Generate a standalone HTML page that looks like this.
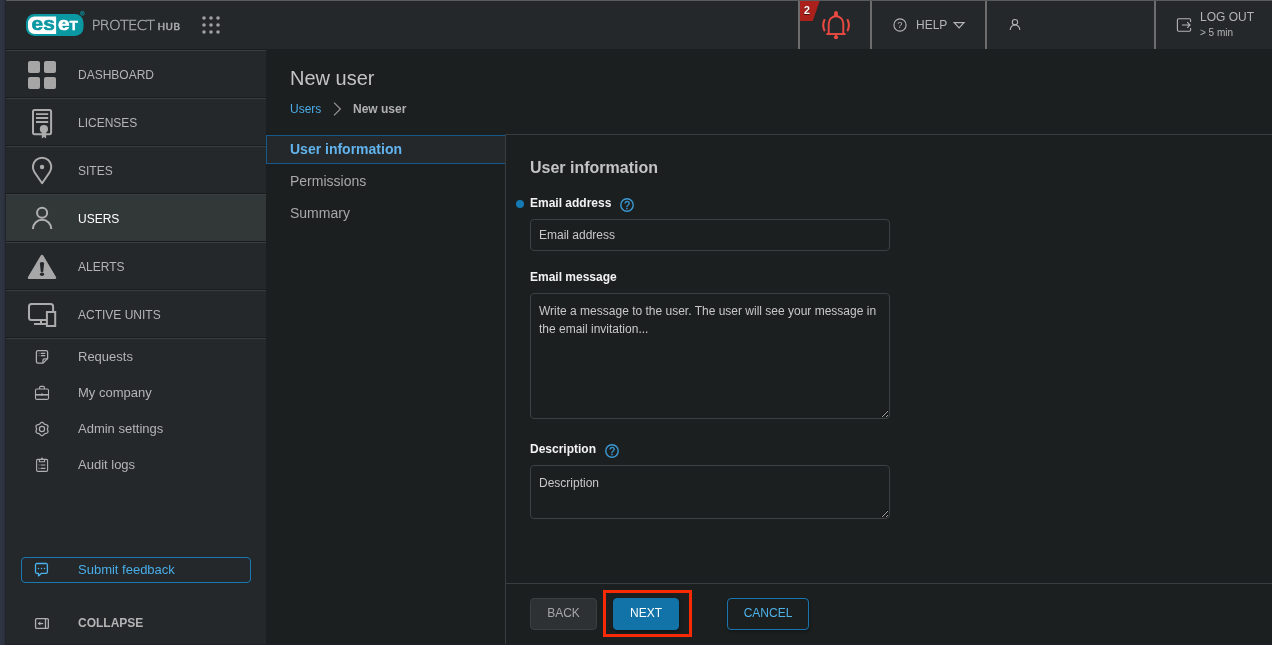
<!DOCTYPE html>
<html lang="en">
<head>
<meta charset="utf-8">
<title>ESET PROTECT HUB - New user</title>
<style>
*{box-sizing:border-box;margin:0;padding:0}
html,body{width:1272px;height:645px;overflow:hidden;background:#1c1f20;font-family:"Liberation Sans",Arial,sans-serif;color:#b4b4b4}
.abs{position:absolute}
#strip{left:0;top:0;width:6px;height:645px;background:linear-gradient(90deg,#2f3542 0,#2f3542 2px,#2e3340 2px,#2e3340 4px,#2b2f3b 4px,#2b2f3b 5px,#20232c 5px,#20232c 6px)}
#topline{left:6px;top:0;width:1266px;height:1px;background:#5b5b5b}
#header{left:6px;top:1px;width:1266px;height:48px;background:#24282b}
#hdrline{left:6px;top:49px;width:260px;height:1px;background:#181a1c}
#sidebar{left:6px;top:50px;width:260px;height:595px;background:#24282b}
.mi{position:absolute;left:0;width:260px;height:48px;border-top:1px solid #393e40;border-bottom:1px solid #191b1d;font-size:12px;color:#b4b4b4}
.mi span{position:absolute;left:72px;top:1px;line-height:46px;white-space:nowrap}
.mi.act{background:#313837;color:#fff}
.mi svg{position:absolute;left:0;top:-1px}
.si{position:absolute;left:0;width:260px;height:36px;font-size:13px;color:#b4b4b4}
.si span{position:absolute;left:72px;top:0;line-height:36px;white-space:nowrap}
.sep{position:absolute;top:0;width:2px;height:48px;background:#6d6d6d}
.lbl{position:absolute;font-weight:bold;font-size:12px;color:#f2f2f2;white-space:nowrap;line-height:14px}
.fld{position:absolute;left:530px;width:360px;background:#1c1f20;border:1px solid #3c4042;border-radius:4px;color:#c8c8c8;font:12px/18px "Liberation Sans",Arial,sans-serif;padding:6px 8px;outline:none}
.fld::placeholder{color:#c8c8c8;opacity:1}
.btn{position:absolute;top:598px;height:32px;border-radius:4px;font-size:12px;line-height:28px;text-align:center;white-space:nowrap}
</style>
</head>
<body>
<div id="root" style="position:absolute;left:0;top:0;width:1272px;height:645px;will-change:transform">
<div id="strip" class="abs"></div>
<div id="topline" class="abs"></div>
<div id="header" class="abs">
  <!-- logo -->
  <svg class="abs" style="left:14px;top:8px" width="210" height="34" viewBox="20 9 210 34">
    <rect x="26" y="14.1" width="57.5" height="22" rx="8.500" fill="#0a98a3"/>
    <path d="M34.500 16.600H56.100V33.900H34.500A6.500 6.500 0 0 1 28 27.400V23.100A6.500 6.500 0 0 1 34.500 16.600Z" fill="#fff"/>
    <g font-family="Liberation Sans, Arial, sans-serif" font-weight="bold" stroke-linejoin="round">
    <text transform="translate(31.600 30.100) scale(1.170 1)" font-size="17.800" fill="#0a98a3" stroke="#0a98a3" stroke-width="0.600">es</text>
    <text transform="translate(58.100 30.100) scale(1.170 1)" font-size="17.800" fill="#fff" stroke="#fff" stroke-width="0.600">e</text>
    <text transform="translate(69.700 30.100) scale(0.970 1)" font-size="13.600" fill="#fff" stroke="#fff" stroke-width="0.600">T</text>
    </g>
    <circle cx="82.400" cy="13.300" r="2" fill="none" stroke="#0a98a3" stroke-width="0.700"/>
    <text x="81.250" y="14.500" font-family="Liberation Sans, Arial, sans-serif" font-weight="bold" font-size="3.200" fill="#0a98a3">R</text>
    <text transform="translate(91.400 30.200) scale(1.048 1)" font-family="DejaVu Sans Light, DejaVu Sans, sans-serif" font-weight="200" font-size="14.300" letter-spacing="-0.900" fill="#a9abac" stroke="#a9abac" stroke-width="0.350">PROTECT</text>
    <text transform="translate(157.600 30.200) scale(1.170 1)" font-family="DejaVu Sans, sans-serif" font-size="8.700" letter-spacing="0.200" fill="#a9abac" stroke="#a9abac" stroke-width="0.450">HUB</text>
    <g fill="#a0a0a0">
      <circle cx="204" cy="18" r="1.8"/><circle cx="211" cy="18" r="1.8"/><circle cx="218" cy="18" r="1.8"/>
      <circle cx="204" cy="25" r="1.8"/><circle cx="211" cy="25" r="1.8"/><circle cx="218" cy="25" r="1.8"/>
      <circle cx="204" cy="32" r="1.8"/><circle cx="211" cy="32" r="1.8"/><circle cx="218" cy="32" r="1.8"/>
    </g>
  </svg>
  <div class="sep" style="left:792px"></div>
  <div class="sep" style="left:864px"></div>
  <div class="sep" style="left:979px"></div>
  <div class="sep" style="left:1148px"></div>
  <!-- badge + bell -->
  <svg class="abs" style="left:794px;top:0" width="70" height="48" viewBox="800 1 70 48">
    <path d="M800 1 H819.6 L812.8 21 H800 Z" fill="#aa211c"/>
    <text x="803.900" y="15.400" font-family="Liberation Sans, Arial, sans-serif" font-weight="bold" font-size="10.600" fill="#4a0d0a">2</text><text x="803.900" y="14.400" font-family="Liberation Sans, Arial, sans-serif" font-weight="bold" font-size="10.600" fill="#fff">2</text>
    <g fill="none" stroke="#ea4a41" stroke-width="1.900" stroke-linecap="round">
      <path d="M828.700 34 V23.700 A7.300 7.500 0 0 1 843.300 23.700 V34"/>
      <path d="M826.4 34 H845.6" stroke-linecap="butt"/>
      <path d="M836 15.200 V13" stroke-width="3.800"/>
      <path d="M824.400 20 Q822 25.200 824.400 30.300" stroke-width="2.100"/>
      <path d="M847.700 20 Q850.100 25.200 847.700 30.300" stroke-width="2.100"/>
    </g>
    <circle cx="836" cy="37.300" r="2.050" fill="#ea4a41"/><rect x="835.300" y="34" width="1.400" height="2" fill="#ea4a41"/>
  </svg>
  <!-- help -->
  <svg class="abs" style="left:884px;top:14px" width="84" height="22" viewBox="890 15 84 22">
    <circle cx="900" cy="25" r="6.1" fill="none" stroke="#b4b4b4" stroke-width="1.1"/>
    <text x="897.3" y="28.4" font-family="Liberation Sans, Arial, sans-serif" font-size="9.4" fill="#b4b4b4">?</text>
    <path d="M954.2 22.6 H964 L959.1 27.8 Z" fill="none" stroke="#b4b4b4" stroke-width="1.2" stroke-linejoin="miter"/>
  </svg>
  <div class="abs" style="left:910px;top:17px;font-size:12px;line-height:14px;color:#b4b4b4">HELP</div>
  <!-- user -->
  <svg class="abs" style="left:1001px;top:16px" width="16" height="16" viewBox="1007 17 16 16">
    <circle cx="1015" cy="22.2" r="2.7" fill="none" stroke="#b4b4b4" stroke-width="1.1"/>
    <path d="M1010.2 30 A4.8 5 0 0 1 1019.8 30" fill="none" stroke="#b4b4b4" stroke-width="1.1"/>
  </svg>
  <!-- logout -->
  <svg class="abs" style="left:1168px;top:15px" width="20" height="20" viewBox="1174 16 20 20">
    <path d="M1190.6 22 V20 A1.2 1.2 0 0 0 1189.4 18.8 H1178.6 A1.2 1.2 0 0 0 1177.4 20 V30 A1.2 1.2 0 0 0 1178.6 31.2 H1189.4 A1.2 1.2 0 0 0 1190.6 30 V28" fill="none" stroke="#b4b4b4" stroke-width="1.1"/>
    <path d="M1182 25 H1190 M1187.2 22.2 L1190 25 L1187.2 27.8" fill="none" stroke="#b4b4b4" stroke-width="1.1"/>
  </svg>
  <div class="abs" style="left:1194px;top:9px;font-size:12px;line-height:14px;color:#b4b4b4;white-space:nowrap">LOG OUT</div>
  <div class="abs" style="left:1194px;top:26px;font-size:10px;line-height:12px;color:#b4b4b4;white-space:nowrap">&gt; 5 min</div>
</div>
<div id="hdrline" class="abs"></div>

<div id="sidebar" class="abs">
  <div class="mi" style="top:0"><svg width="72" height="48" viewBox="6 50 72 48"><g fill="#a6a6a6"><rect x="28" y="61" width="12" height="12" rx="2"/><rect x="44" y="61" width="12" height="12" rx="2"/><rect x="28" y="77" width="12" height="12" rx="2"/><rect x="44" y="77" width="12" height="12" rx="2"/></g></svg><span>DASHBOARD</span></div>
  <div class="mi" style="top:48px"><svg width="72" height="48" viewBox="6 98 72 48"><g fill="none" stroke="#acacac"><rect x="33" y="110" width="18.1" height="24.2" rx="1.6" stroke-width="2"/><path d="M36 114.1H48.200M36 118H48.200M36 122H48.200" stroke-width="1.9"/></g><circle cx="43.9" cy="129" r="4.1" fill="#acacac"/><path d="M41.8 131V138.6L43.950 136.900L46.100 138.600V131Z" fill="#acacac"/></svg><span>LICENSES</span></div>
  <div class="mi" style="top:96px"><svg width="72" height="48" viewBox="6 146 72 48"><path d="M42.100 183.200L49.670 172.220A9.200 9.200 0 1 0 34.530 172.220Z" fill="none" stroke="#acacac" stroke-width="2" stroke-linejoin="round"/><circle cx="42.050" cy="167" r="2.2" fill="#acacac"/></svg><span>SITES</span></div>
  <div class="mi act" style="top:144px"><svg width="72" height="48" viewBox="6 194 72 48"><circle cx="42.100" cy="212.700" r="5.050" fill="none" stroke="#b0b0b0" stroke-width="2"/><path d="M32.900 229A9.200 9.300 0 0 1 51.300 229" fill="none" stroke="#b0b0b0" stroke-width="2"/></svg><span>USERS</span></div>
  <div class="mi" style="top:192px"><svg width="72" height="48" viewBox="6 242 72 48"><path d="M42 256L54.900 277.700H29.100Z" fill="#a8a8a8" stroke="#a8a8a8" stroke-width="2.600" stroke-linejoin="round"/><path d="M39.900 262.900Q42 261.300 44.100 262.900L43.300 271.600Q42 272.700 40.700 271.600Z" fill="#24282b"/><ellipse cx="42" cy="274.300" rx="2.100" ry="1.700" fill="#24282b"/></svg><span>ALERTS</span></div>
  <div class="mi" style="top:240px"><svg width="72" height="48" viewBox="6 290 72 48"><g fill="none" stroke="#acacac" stroke-width="2"><rect x="29" y="304" width="24.100" height="16.100" rx="2.500"/><path d="M41 320.400V324M34 324H46.500" /><rect x="46.900" y="312" width="8.300" height="14" fill="#24282b"/></g></svg><span>ACTIVE UNITS</span></div>

  <div class="abs" style="left:0;top:288px;width:260px;height:1px;background:#393e40"></div>
  <div class="si" style="top:289px"><svg class="abs" style="left:0;top:0" width="72" height="36" viewBox="6 339 72 36"><g fill="none" stroke="#b0b0b0" stroke-width="1.3"><path d="M38 350.6H46A1.6 1.6 0 0 1 47.6 352.2V358.6L43 363.2H38A1.6 1.6 0 0 1 36.4 361.6V352.2A1.6 1.6 0 0 1 38 350.6Z"/><path d="M47.4 358.8H44.4A1.4 1.4 0 0 0 43 360.2V363"/><path d="M40.800 353.400H45.200M40.800 355.700H45.200"/><path d="M38.600 353.400H39.600M38.600 355.700H39.600" stroke-opacity="0.500"/></g></svg><span>Requests</span></div>
  <div class="si" style="top:325px"><svg class="abs" style="left:0;top:0" width="72" height="36" viewBox="6 375 72 36"><g fill="none" stroke="#b0b0b0" stroke-width="1.1"><rect x="35.5" y="389" width="13" height="10.4" rx="1.4"/><path d="M39.6 389V387.6A1.2 1.2 0 0 1 40.8 386.4H43.2A1.2 1.2 0 0 1 44.4 387.6V389"/><path d="M35.5 394.800H48.5" stroke-width="1.600"/><path d="M42 393.2V395.8"/></g></svg><span>My company</span></div>
  <div class="si" style="top:361px"><svg class="abs" style="left:0;top:0" width="72" height="36" viewBox="6 411 72 36"><g fill="none" stroke="#b0b0b0" stroke-width="1.1" stroke-linejoin="round"><path d="M47.45 429.00L47.51 428.52L47.66 428.00L47.84 427.43L47.97 426.83L47.95 426.22L47.76 425.68L47.38 425.23L46.86 424.92L46.28 424.72L45.70 424.60L45.17 424.47L44.73 424.28L44.34 423.99L43.97 423.60L43.57 423.16L43.10 422.75L42.57 422.46L42.00 422.35L41.43 422.46L40.90 422.75L40.43 423.16L40.03 423.60L39.66 423.99L39.27 424.28L38.83 424.47L38.30 424.60L37.72 424.72L37.14 424.92L36.62 425.23L36.24 425.68L36.05 426.22L36.03 426.83L36.16 427.43L36.34 428.00L36.49 428.52L36.55 429.00L36.49 429.48L36.34 430.00L36.16 430.57L36.03 431.17L36.05 431.78L36.24 432.32L36.62 432.77L37.14 433.08L37.72 433.28L38.30 433.40L38.83 433.53L39.27 433.72L39.66 434.01L40.03 434.40L40.43 434.84L40.90 435.25L41.43 435.54L42.00 435.65L42.57 435.54L43.10 435.25L43.57 434.84L43.97 434.40L44.34 434.01L44.72 433.72L45.17 433.53L45.70 433.40L46.28 433.28L46.86 433.08L47.38 432.77L47.76 432.32L47.95 431.78L47.97 431.17L47.84 430.57L47.66 430.00L47.51 429.48Z" stroke-width="1.250"/><circle cx="42" cy="429" r="2.600" stroke-width="1.200"/></g></svg><span>Admin settings</span></div>
  <div class="si" style="top:397px"><svg class="abs" style="left:0;top:0" width="72" height="36" viewBox="6 447 72 36"><g fill="none" stroke="#b0b0b0" stroke-width="1.1"><rect x="36.6" y="459.4" width="11" height="12" rx="1.2"/><path d="M39.400 459.400V461.700H44.600V459.400"/><circle cx="42" cy="458.300" r="0.900" fill="#b0b0b0" stroke="none"/><path d="M40.6 465H45.4M40.6 468.4H45.4"/><path d="M38.6 465H39.4M38.6 468.4H39.4"/></g></svg><span>Audit logs</span></div>

  <div class="abs" style="left:15px;top:507px;width:230px;height:26px;border:1px solid #1b78b0;border-radius:4px"></div>
  <svg class="abs" style="left:26px;top:510px" width="20" height="20" viewBox="32 560 20 20"><path d="M36.900 563.500H46A1.400 1.400 0 0 1 47.400 564.900V572A1.400 1.400 0 0 1 46 573.400H41.200L38.500 575.900V573.400H36.900A1.400 1.400 0 0 1 35.500 572V564.900A1.400 1.400 0 0 1 36.900 563.500Z" fill="none" stroke="#4ab2ec" stroke-width="1.3" stroke-linejoin="round"/><g fill="#4ab2ec"><circle cx="38.500" cy="568.500" r="0.750"/><circle cx="41.500" cy="568.500" r="0.750"/><circle cx="44.500" cy="568.500" r="0.750"/></g></svg>
  <div class="abs" style="left:72px;top:512px;font-size:13px;line-height:15px;color:#4aace6;white-space:nowrap">Submit feedback</div>

  <svg class="abs" style="left:26px;top:564px" width="20" height="20" viewBox="32 614 20 20"><g fill="none" stroke="#b0b0b0" stroke-width="1.300"><rect x="35.550" y="618.650" width="12.800" height="9.800" rx="1.200"/><path d="M45.500 618.600V628.600"/><path d="M39 623.550H43.200"/><path d="M40.300 621.500L37.600 623.550L40.300 625.600Z" fill="#b0b0b0" stroke="none"/></g></svg>
  <div class="abs" style="left:72px;top:566px;font-size:12px;line-height:14px;font-weight:bold;color:#b4b4b4;white-space:nowrap">COLLAPSE</div>
</div>

<!-- main -->
<div class="abs" style="left:290px;top:66px;font-size:20px;line-height:24px;color:#c4c4c4;white-space:nowrap">New user</div>
<div class="abs" style="left:290px;top:102px;font-size:12px;line-height:14px;color:#4aace6;white-space:nowrap">Users</div>
<svg class="abs" style="left:330px;top:101px" width="14" height="16" viewBox="0 0 14 16"><path d="M4 1.6L10.400 8L4 14.4" fill="none" stroke="#9a9a9a" stroke-width="1.1"/></svg>
<div class="abs" style="left:353px;top:102px;font-size:12px;line-height:14px;font-weight:bold;color:#b0b0b0;white-space:nowrap">New user</div>

<div class="abs" style="left:266px;top:135px;width:240px;height:29px;background:#24282b;border:1px solid #16588a;border-right:none"></div>
<div class="abs" style="left:290px;top:141px;font-size:14px;line-height:16px;font-weight:bold;color:#62b4ee;white-space:nowrap">User information</div>
<div class="abs" style="left:290px;top:173px;font-size:14px;line-height:16px;color:#a8a8a8;white-space:nowrap">Permissions</div>
<div class="abs" style="left:290px;top:205px;font-size:14px;line-height:16px;color:#a8a8a8;white-space:nowrap">Summary</div>

<div class="abs" style="left:505px;top:134px;width:767px;height:511px;border-left:1px solid #3a3d3f;border-top:1px solid #3a3d3f"></div>
<div class="abs" style="left:506px;top:583px;width:766px;height:1px;background:#3a3d3f"></div>

<div class="abs" style="left:530px;top:159px;font-size:16px;line-height:18px;font-weight:bold;color:#c4c4c4;white-space:nowrap">User information</div>

<div class="abs" style="left:516px;top:200px;width:8px;height:8px;border-radius:50%;background:#137ab3"></div>
<div class="lbl" style="left:530px;top:196px">Email address</div>
<svg class="abs" style="left:619px;top:197px" width="16" height="16" viewBox="0 0 16 16"><circle cx="8" cy="8" r="6.2" fill="none" stroke="#3a9bd6" stroke-width="1.4"/><text x="5.15" y="11.7" font-family="Liberation Sans, Arial, sans-serif" font-size="10.3" fill="#3a9bd6" stroke="#3a9bd6" stroke-width="0.300">?</text></svg>
<input class="fld" style="top:219px;height:32px" placeholder="Email address">

<div class="lbl" style="left:530px;top:270px">Email message</div>
<textarea class="fld" style="top:293px;height:126px;padding-top:8px" placeholder="Write a message to the user. The user will see your message in the email invitation..."></textarea>

<div class="lbl" style="left:530px;top:442px">Description</div>
<svg class="abs" style="left:604px;top:443px" width="16" height="16" viewBox="0 0 16 16"><circle cx="8" cy="8" r="6.2" fill="none" stroke="#3a9bd6" stroke-width="1.4"/><text x="5.15" y="11.7" font-family="Liberation Sans, Arial, sans-serif" font-size="10.3" fill="#3a9bd6" stroke="#3a9bd6" stroke-width="0.300">?</text></svg>
<textarea class="fld" style="top:465px;height:54px;padding-top:8px" placeholder="Description"></textarea>

<div class="btn" style="left:530px;width:67px;background:#2d3134;border:1px solid #3b3f42;color:#a6a6a6">BACK</div>
<div class="abs" style="left:603px;top:590px;width:89px;height:47px;border:3px solid #f82a04"></div>
<div class="btn" style="left:613px;width:66px;background:#1173a8;border:1px solid #1173a8;color:#fff;box-shadow:1px 2px 3px rgba(0,0,0,.35)">NEXT</div>
<div class="btn" style="left:727px;width:82px;border:1px solid #1975ad;color:#4eb2ea;box-shadow:1px 2px 3px rgba(0,0,0,.25)">CANCEL</div>
<div class="abs" style="left:6px;top:644px;width:1266px;height:1px;background:#1f222a"></div>
</div>
</body>
</html>
